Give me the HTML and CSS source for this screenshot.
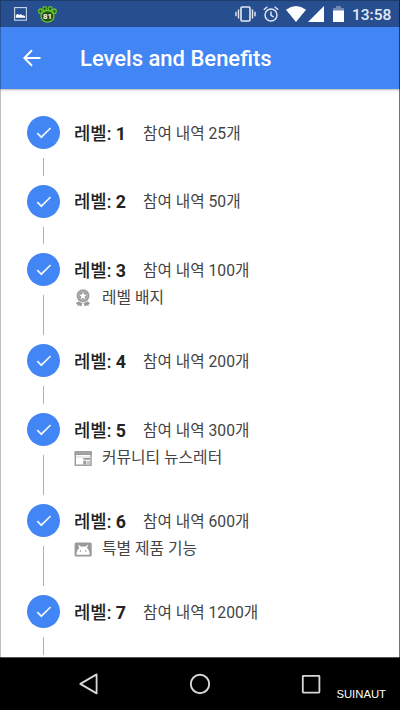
FILE: index.html
```html
<!DOCTYPE html>
<html lang="ko">
<head>
  <meta charset="UTF-8" />
  <meta name="viewport" content="width=device-width, initial-scale=1.0"/>
  <title>Levels and Benefits</title>
  <link rel="stylesheet" href="styles.css">
</head>
<body>
  <!-- Shared check mark -->
  <svg class="defs" width="0" height="0">
    <symbol id="check" viewBox="0 0 33 33">
      <path d="M10.3 17.1l4 4.1L23.6 12" fill="none" stroke="#eef4ff" stroke-width="1.7"/>
    </symbol>
  </svg>

  <div class="screen">
    <!-- Status bar -->
    <header class="status">
      <svg class="picture" width="13" height="14" viewBox="0 0 13 14">
        <rect x=".6" y=".6" width="11.8" height="12.6" fill="none" stroke="#c9d6ec" stroke-width="1.1"/>
        <path d="M1.8 10.7V8.4l1.7-1.6 1.5 1.3 1.8-1.1 1.6 1.5 1.2-.2 1.5 1v1.4z" fill="#fff"/>
      </svg>
      <svg class="paw" width="19" height="17" viewBox="0 0 19 17">
        <g fill="#254b18" stroke="#5fc52d" stroke-width="1.3">
          <ellipse cx="2.4" cy="5.2" rx="1.7" ry="2.2"/>
          <ellipse cx="6.7" cy="2.7" rx="1.8" ry="2"/>
          <ellipse cx="12.2" cy="2.7" rx="1.8" ry="2"/>
          <ellipse cx="16.5" cy="5.2" rx="1.7" ry="2.2"/>
          <path d="M9.5 4.5c3.500 0 6.500 2.600 6.500 5.800 0 3.500-3.100 5.800-6.500 5.800S3 13.800 3 10.300c0-3.200 3-5.800 6.500-5.800z"/>
        </g>
        <text x="9.5" y="13.200" text-anchor="middle">81</text>
      </svg>
      <span class="spacer"></span>
      <svg class="vibrate" width="21" height="16" viewBox="0 0 21 16">
        <rect x="6" y="1" width="9" height="14" rx="1" fill="none" stroke="#e4eaf5" stroke-width="1.6"/>
        <path d="M3.5 3.5v9M17.5 3.5v9M1 5.7v4.6M20 5.7v4.6" stroke="#e4eaf5" stroke-width="1.4"/>
      </svg>
      <svg class="alarm" width="16" height="16" viewBox="0 0 16 16">
        <g fill="none" stroke="#e4eaf5" stroke-width="1.4">
          <circle cx="8" cy="9" r="6"/>
          <path d="M.8 3.7L4.4.8M15.2 3.7L11.6.8M8 5.5v3.8l2.7 1.7"/>
        </g>
      </svg>
      <svg class="wifi" width="20" height="16" viewBox="0 0 20 16">
        <path d="M0 3.7Q10-3.500 20 3.700L10 16z" fill="#fff"/>
      </svg>
      <svg class="signal" width="16" height="16" viewBox="0 0 16 16">
        <path d="M16 0v16H0z" fill="#fff"/>
      </svg>
      <svg class="battery" width="11" height="17" viewBox="0 0 11 17">
        <path d="M3 0h5v2h3v3H0V2h3z" fill="#7087b2"/>
        <path d="M0 4.5h11V16H0z" fill="#fff"/>
      </svg>
      <span class="clock">13:58</span>
    </header>

    <!-- App bar -->
    <div class="appbar">
      <svg width="18" height="18" viewBox="0 0 18 18">
        <path d="M17.5 9H1.5M9 1.2L1.3 9 9 16.8" fill="none" stroke="#fff" stroke-width="2"/>
      </svg>
      <h1>Levels and Benefits</h1>
    </div>

    <!-- Level list -->
    <ul class="levels">
      <li class="level">
        <div class="rail"><svg class="dot"><use href="#check"/></svg><i></i></div>
        <div class="info">
          <div class="head"><b>레벨: <em>1</em></b><span>참여 내역 25개</span></div>
        </div>
      </li>
      <li class="level">
        <div class="rail"><svg class="dot"><use href="#check"/></svg><i></i></div>
        <div class="info">
          <div class="head"><b>레벨: <em>2</em></b><span>참여 내역 50개</span></div>
        </div>
      </li>
      <li class="level tall">
        <div class="rail"><svg class="dot"><use href="#check"/></svg><i></i></div>
        <div class="info">
          <div class="head"><b>레벨: <em>3</em></b><span>참여 내역 100개</span></div>
          <div class="benefit">
            <svg width="18" height="18" viewBox="0 0 18 18">
              <path d="M4.3 12.2l4.2 1.8-1.3 3.5-1.9-1.2-2 1 .3-2-1.9-.5zM13.7 12.2L9.5 14l1.3 3.5 1.9-1.2 2 1-.3-2 1.9-.5z" fill="#999"/>
              <circle cx="9" cy="6.8" r="6.7" fill="#999" stroke="#fff" stroke-width=".6"/>
              <circle cx="9" cy="6.8" r="4.5" fill="none" stroke="#c6c6c6" stroke-width=".7"/>
              <path d="M9 3l1.1 2.5 2.7.3-2 1.8.5 2.7L9 8.9l-2.3 1.4.5-2.7-2-1.8 2.7-.3z" fill="#fff"/>
            </svg>
            <span>레벨 배지</span>
          </div>
        </div>
      </li>
      <li class="level">
        <div class="rail"><svg class="dot"><use href="#check"/></svg><i></i></div>
        <div class="info">
          <div class="head"><b>레벨: <em>4</em></b><span>참여 내역 200개</span></div>
        </div>
      </li>
      <li class="level tall">
        <div class="rail"><svg class="dot"><use href="#check"/></svg><i></i></div>
        <div class="info">
          <div class="head"><b>레벨: <em>5</em></b><span>참여 내역 300개</span></div>
          <div class="benefit">
            <svg width="18" height="18" viewBox="0 0 18 18">
              <rect x="1.3" y="3" width="15.7" height="13.2" fill="#fff" stroke="#999" stroke-width="1.4"/>
              <path d="M.6 2.3h17.1V6H.6z" fill="#999"/>
              <path d="M2 4.1h14.5" stroke="#ccc" stroke-width=".8" stroke-dasharray="1.4 1"/>
              <path d="M2 8h14" stroke="#ccc" stroke-width=".8"/>
              <path d="M9.3 9h6.7v1.7H9.3zM9.3 11.8h3v3.7h-3z" fill="#999"/>
              <path d="M13 11.8h3v3.7h-3z" fill="#c4c4c4"/>
            </svg>
            <span>커뮤니티 뉴스레터</span>
          </div>
        </div>
      </li>
      <li class="level tall">
        <div class="rail"><svg class="dot"><use href="#check"/></svg><i></i></div>
        <div class="info">
          <div class="head"><b>레벨: <em>6</em></b><span>참여 내역 600개</span></div>
          <div class="benefit">
            <svg width="18" height="18" viewBox="0 0 18 18">
              <rect x=".6" y="2.5" width="17.1" height="14" rx="1.6" fill="#999"/>
              <path d="M2.5 14.8c0-3.3 1-5.3 2.700-6.700L4 4.600l3.200 2.200c1.300-.4 2.500-.4 3.800 0L14.200 4.600 13 8.100c1.700 1.400 2.700 3.400 2.700 6.700z" fill="#fff"/>
              <circle cx="6.500" cy="11" r=".8" fill="#999"/>
              <circle cx="11.700" cy="11" r=".8" fill="#999"/>
            </svg>
            <span>특별 제품 기능</span>
          </div>
        </div>
      </li>
      <li class="level">
        <div class="rail"><svg class="dot"><use href="#check"/></svg><i></i></div>
        <div class="info">
          <div class="head"><b>레벨: <em>7</em></b><span>참여 내역 1200개</span></div>
        </div>
      </li>
    </ul>

    <!-- Navigation bar -->
    <nav class="navbar">
      <svg width="20" height="22" viewBox="0 0 20 22">
        <path d="M17.6 1.4v19L1.3 10.9z" fill="none" stroke="#d8d8d8" stroke-width="1.8" stroke-linejoin="round"/>
      </svg>
      <svg width="22" height="22" viewBox="0 0 22 22">
        <circle cx="11" cy="11" r="9.2" fill="none" stroke="#d8d8d8" stroke-width="1.9"/>
      </svg>
      <svg width="20" height="20" viewBox="0 0 20 20">
        <rect x="1.8" y="1.8" width="16.6" height="16.8" rx=".5" fill="none" stroke="#d8d8d8" stroke-width="1.8"/>
      </svg>
      <span class="mark">SUINAUT</span>
    </nav>
  </div>
</body>
</html>
```
FILE: styles.css
```css
* {
  margin: 0;
  padding: 0;
  box-sizing: border-box;
}

body {
  width: 400px;
  height: 710px;
  overflow: hidden;
  font-family: Roboto, "Noto Sans CJK KR", sans-serif;
}

svg {
  display: block;
  flex: none;
}

.defs {
  position: absolute;
}

.screen {
  position: relative;
  height: 710px;
  display: flex;
  flex-direction: column;
  background: #fff;
}

/* thin frame round the screen */
.screen::after {
  content: "";
  position: absolute;
  inset: 0;
  border: 1px solid rgba(0, 0, 0, 0.25);
  border-right-color: rgba(0, 0, 0, 0.55);
}

.status {
  height: 27px;
  flex: none;
  display: flex;
  align-items: center;
  padding: 1px 9px 0 14px;
  background: #274f8f;
}

.paw {
  margin-left: 11px;
}

.paw text {
  font: bold 8px Roboto, sans-serif;
  fill: #fff;
}

.spacer {
  flex: 1;
}

.alarm {
  margin-left: 7px;
}

.wifi {
  margin-left: 7px;
}

.signal {
  margin-left: 2px;
}

.battery {
  margin-left: 9px;
}

.clock {
  width: 39px;
  margin-left: 8px;
  padding-top: 1px;
  font-size: 15.5px;
  font-weight: 500;
  line-height: 20px;
  white-space: nowrap;
  color: #e4eaf5;
}

.appbar {
  height: 62px;
  flex: none;
  display: flex;
  align-items: center;
  padding: 0 0 0 23px;
  background: #4285f4;
  color: #fff;
  box-shadow: 0 1px 2px rgba(0, 0, 0, 0.3);
}

.appbar h1 {
  margin-left: 39px;
  padding-top: 2px;
  font-size: 22px;
  font-weight: 500;
  line-height: 30px;
}

.levels {
  flex: 1;
  min-height: 0;
  overflow: hidden;
  padding: 27px 0 0 27px;
  list-style: none;
}

.level {
  display: flex;
  height: 68.7px;
}

.level.tall {
  height: 91px;
}

.rail {
  width: 33px;
  display: flex;
  flex-direction: column;
  align-items: center;
}

.dot {
  width: 33px;
  height: 33px;
  border-radius: 50%;
  background: #4285f4;
}

.rail i {
  flex: 1;
  width: 1px;
  margin: 9px 0;
  background: #b0b0b0;
}

.info {
  padding: 0.6px 0 0 14px;
}

.head {
  display: flex;
  align-items: center;
  height: 33px;
  line-height: 33px;
  white-space: nowrap;
}

.head b {
  width: 69px;
  font-size: 17.8px;
  font-weight: 500;
  color: #222;
}

.head em {
  font-style: normal;
  font-weight: 700;
}

.head span {
  font-size: 15.7px;
  color: #444;
}

.benefit {
  display: flex;
  align-items: center;
  height: 22px;
}

.benefit span {
  margin-left: 10px;
  font-size: 15.8px;
  line-height: 22px;
  color: #444;
}

.navbar {
  position: relative;
  height: 53px;
  flex: none;
  display: flex;
  align-items: center;
  gap: 90px;
  padding-left: 79px;
  background: #000;
  border-top: 1px solid #555;
}

.mark {
  position: absolute;
  right: 14px;
  bottom: 9px;
  font: 11.3px/14px "Liberation Sans", sans-serif;
  color: #fff;
}
```
